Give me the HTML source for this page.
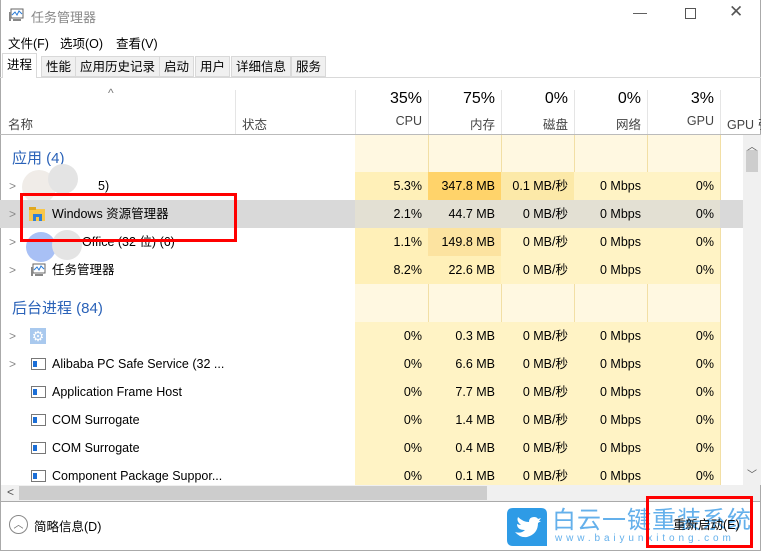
<!DOCTYPE html><html><head><meta charset="utf-8"><style>
*{margin:0;padding:0;box-sizing:border-box}
body{width:761px;height:551px;overflow:hidden;background:#fff;font-family:"Liberation Sans","Noto Sans CJK SC",sans-serif;font-size:12px;color:#000;position:relative}
.a{position:absolute;white-space:nowrap}
.r{position:absolute;left:0;width:743px;height:28px}
.c{position:absolute;top:0;height:28px;line-height:28px;text-align:right;padding-right:6px;font-size:12.5px}
.nm{position:absolute;left:52px;top:0;line-height:28px;font-size:12.5px}
.ch{position:absolute;left:9px;top:0;line-height:28px;color:#888;font-size:12px}
.ic{position:absolute;left:31px;top:8px;width:15px;height:12px;border:1px solid #777;background:#fff}
.ic:after{content:"";position:absolute;left:1px;top:2px;width:4px;height:6px;background:#1b6ed6}
.tab{position:absolute;top:56px;height:21px;line-height:20px;border:1px solid #d9d9d9;background:#f0f0f0;padding:0 4px;font-size:12.5px}
</style></head><body>
<div class="a" style="left:0;top:0;width:761px;height:551px;border:1px solid #aaa;border-top:none"></div>
<svg class="a" style="left:8px;top:8px" width="16" height="14"><rect x="3" y="1" width="12" height="9" fill="#fff" stroke="#666"/><polyline points="4,7 7,4 9,7 11,3 14,6" fill="none" stroke="#2a7bd6"/><rect x="1" y="4" width="2" height="9" fill="#888"/><rect x="5" y="11" width="8" height="2" fill="#888"/></svg>
<div class="a" style="left:31px;top:7px;font-size:13px;color:#888">任务管理器</div>
<div class="a" style="left:633px;top:4px;font-size:14px;color:#555">—</div>
<div class="a" style="left:685px;top:8px;width:11px;height:11px;border:1px solid #555"></div>
<div class="a" style="left:729px;top:2px;font-size:17px;color:#555">✕</div>
<div class="a" style="left:8px;top:33px;font-size:12.5px">文件(F)</div>
<div class="a" style="left:60px;top:33px;font-size:12.5px">选项(O)</div>
<div class="a" style="left:116px;top:33px;font-size:12.5px">查看(V)</div>
<div class="a" style="left:0;top:77px;width:761px;border-top:1px solid #d9d9d9"></div>
<div class="tab" style="left:41px">性能</div><div class="tab" style="left:75px">应用历史记录</div><div class="tab" style="left:159px">启动</div><div class="tab" style="left:195px">用户</div><div class="tab" style="left:231px">详细信息</div><div class="tab" style="left:291px">服务</div>
<div class="tab" style="left:2px;top:53px;height:25px;background:#fff;border-bottom:none;line-height:22px">进程</div>
<div class="a" style="left:108px;top:86px;color:#777;font-size:12px">^</div>
<div class="a" style="left:8px;top:114px;color:#444;font-size:12.5px">名称</div>
<div class="a" style="left:242px;top:114px;color:#444;font-size:12.5px">状态</div>
<div class="a" style="left:235px;top:90px;height:44px;border-left:1px solid #e5e5e5"></div>
<div class="a" style="left:355px;top:90px;height:44px;border-left:1px solid #e5e5e5"></div>
<div class="a" style="left:428px;top:90px;height:44px;border-left:1px solid #e5e5e5"></div>
<div class="a" style="left:501px;top:90px;height:44px;border-left:1px solid #e5e5e5"></div>
<div class="a" style="left:574px;top:90px;height:44px;border-left:1px solid #e5e5e5"></div>
<div class="a" style="left:647px;top:90px;height:44px;border-left:1px solid #e5e5e5"></div>
<div class="a" style="left:720px;top:90px;height:44px;border-left:1px solid #e5e5e5"></div>
<div class="a" style="left:355px;top:90px;width:67px;text-align:right;font-size:16px">35%</div>
<div class="a" style="left:428px;top:90px;width:67px;text-align:right;font-size:16px">75%</div>
<div class="a" style="left:501px;top:90px;width:67px;text-align:right;font-size:16px">0%</div>
<div class="a" style="left:574px;top:90px;width:67px;text-align:right;font-size:16px">0%</div>
<div class="a" style="left:647px;top:90px;width:67px;text-align:right;font-size:16px">3%</div>
<div class="a" style="left:355px;top:114px;width:67px;text-align:right;color:#444;font-size:12.5px">CPU</div>
<div class="a" style="left:428px;top:114px;width:67px;text-align:right;color:#444;font-size:12.5px">内存</div>
<div class="a" style="left:501px;top:114px;width:67px;text-align:right;color:#444;font-size:12.5px">磁盘</div>
<div class="a" style="left:574px;top:114px;width:67px;text-align:right;color:#444;font-size:12.5px">网络</div>
<div class="a" style="left:647px;top:114px;width:67px;text-align:right;color:#444;font-size:12.5px">GPU</div>
<div class="a" style="left:727px;top:114px;color:#444;font-size:12.5px">GPU 引</div>
<div class="a" style="left:0;top:134px;width:761px;border-top:1px solid #bbb"></div>
<div class="a" style="left:355px;top:135px;width:365px;height:350px;background:#fff8e1"></div>
<div class="a" style="left:428px;top:135px;height:350px;border-left:1px solid #f2dfa5"></div>
<div class="a" style="left:501px;top:135px;height:350px;border-left:1px solid #f2dfa5"></div>
<div class="a" style="left:574px;top:135px;height:350px;border-left:1px solid #f2dfa5"></div>
<div class="a" style="left:647px;top:135px;height:350px;border-left:1px solid #f2dfa5"></div>
<div class="a" style="left:720px;top:135px;height:350px;border-left:1px solid #f2dfa5"></div>
<div class="a" style="left:12px;top:147px;font-size:15px;color:#2a62b8">应用 (4)</div>
<div class="a" style="left:12px;top:297px;font-size:15px;color:#2a62b8">后台进程 (84)</div>
<div class="r" style="top:172px"><div class="ch">&gt;</div>
<div class="a" style="left:22px;top:-2px;width:34px;height:34px;border-radius:50%;background:#f0ece8"></div><div class="a" style="left:48px;top:-8px;width:30px;height:30px;border-radius:50%;background:#e4e4e4"></div><div class="nm" style="left:98px">5)</div>
<div class="c" style="left:355px;width:73px;background:#fff0b8">5.3%</div><div class="c" style="left:428px;width:73px;background:#ffd36a">347.8 MB</div><div class="c" style="left:501px;width:73px;background:#fce9a8">0.1 MB/秒</div><div class="c" style="left:574px;width:73px;background:#fff3c5">0 Mbps</div><div class="c" style="left:647px;width:73px;background:#fff3c5">0%</div></div>
<div class="r" style="top:200px;background:#d9d9d9"><div class="ch">&gt;</div>
<svg class="a" style="left:29px;top:7px" width="16" height="14"><rect x="0" y="2" width="16" height="12" fill="#f8c74a"/><rect x="0" y="0" width="7" height="3" fill="#e0a820"/><rect x="4" y="7" width="9" height="7" fill="#2f7fd8"/><rect x="7" y="10" width="3" height="4" fill="#f8c74a"/></svg>
<div class="nm">Windows 资源管理器</div>
<div class="c" style="left:355px;width:365px;background:#e3e0d3"></div>
<div class="c" style="left:355px;width:73px">2.1%</div><div class="c" style="left:428px;width:73px">44.7 MB</div><div class="c" style="left:501px;width:73px">0 MB/秒</div><div class="c" style="left:574px;width:73px">0 Mbps</div><div class="c" style="left:647px;width:73px">0%</div></div>
<div class="r" style="top:228px"><div class="ch">&gt;</div>
<div class="a" style="left:26px;top:4px;width:30px;height:30px;border-radius:50%;background:#a8c0f5"></div><div class="a" style="left:52px;top:2px;width:30px;height:30px;border-radius:50%;background:#e4e4e4"></div><div class="nm" style="left:82px">Office (32 位) (6)</div>
<div class="c" style="left:355px;width:73px;background:#fff0b8">1.1%</div><div class="c" style="left:428px;width:73px;background:#fce3a0">149.8 MB</div><div class="c" style="left:501px;width:73px;background:#fff3c5">0 MB/秒</div><div class="c" style="left:574px;width:73px;background:#fff3c5">0 Mbps</div><div class="c" style="left:647px;width:73px;background:#fff3c5">0%</div></div>
<div class="r" style="top:256px"><div class="ch">&gt;</div>
<svg class="a" style="left:30px;top:7px" width="16" height="14"><rect x="3" y="1" width="12" height="9" fill="#fff" stroke="#666"/><polyline points="4,7 7,4 9,7 11,3 14,6" fill="none" stroke="#2a7bd6"/><rect x="1" y="4" width="2" height="9" fill="#888"/><rect x="5" y="11" width="8" height="2" fill="#888"/></svg>
<div class="nm">任务管理器</div>
<div class="c" style="left:355px;width:73px;background:#fff0b8">8.2%</div><div class="c" style="left:428px;width:73px;background:#fff0b8">22.6 MB</div><div class="c" style="left:501px;width:73px;background:#fff3c5">0 MB/秒</div><div class="c" style="left:574px;width:73px;background:#fff3c5">0 Mbps</div><div class="c" style="left:647px;width:73px;background:#fff3c5">0%</div></div>
<div class="r" style="top:322px"><div class="ch">&gt;</div><div class="a" style="left:30px;top:6px;width:16px;height:16px;background:#a9c9ee;color:#fff;font-size:14px;line-height:16px;text-align:center">⚙</div>
<div class="c" style="left:355px;width:73px;background:#fff3c5">0%</div><div class="c" style="left:428px;width:73px;background:#fff3c5">0.3 MB</div><div class="c" style="left:501px;width:73px;background:#fff3c5">0 MB/秒</div><div class="c" style="left:574px;width:73px;background:#fff3c5">0 Mbps</div><div class="c" style="left:647px;width:73px;background:#fff3c5">0%</div></div>
<div class="r" style="top:350px"><div class="ch">&gt;</div><div class="ic"></div><div class="nm">Alibaba PC Safe Service (32 ...</div>
<div class="c" style="left:355px;width:73px;background:#fff3c5">0%</div><div class="c" style="left:428px;width:73px;background:#fff3c5">6.6 MB</div><div class="c" style="left:501px;width:73px;background:#fff3c5">0 MB/秒</div><div class="c" style="left:574px;width:73px;background:#fff3c5">0 Mbps</div><div class="c" style="left:647px;width:73px;background:#fff3c5">0%</div></div>
<div class="r" style="top:378px"><div class="ic"></div><div class="nm">Application Frame Host</div>
<div class="c" style="left:355px;width:73px;background:#fff3c5">0%</div><div class="c" style="left:428px;width:73px;background:#fff3c5">7.7 MB</div><div class="c" style="left:501px;width:73px;background:#fff3c5">0 MB/秒</div><div class="c" style="left:574px;width:73px;background:#fff3c5">0 Mbps</div><div class="c" style="left:647px;width:73px;background:#fff3c5">0%</div></div>
<div class="r" style="top:406px"><div class="ic"></div><div class="nm">COM Surrogate</div>
<div class="c" style="left:355px;width:73px;background:#fff3c5">0%</div><div class="c" style="left:428px;width:73px;background:#fff3c5">1.4 MB</div><div class="c" style="left:501px;width:73px;background:#fff3c5">0 MB/秒</div><div class="c" style="left:574px;width:73px;background:#fff3c5">0 Mbps</div><div class="c" style="left:647px;width:73px;background:#fff3c5">0%</div></div>
<div class="r" style="top:434px"><div class="ic"></div><div class="nm">COM Surrogate</div>
<div class="c" style="left:355px;width:73px;background:#fff3c5">0%</div><div class="c" style="left:428px;width:73px;background:#fff3c5">0.4 MB</div><div class="c" style="left:501px;width:73px;background:#fff3c5">0 MB/秒</div><div class="c" style="left:574px;width:73px;background:#fff3c5">0 Mbps</div><div class="c" style="left:647px;width:73px;background:#fff3c5">0%</div></div>
<div class="r" style="top:462px;height:23px;overflow:hidden"><div class="ic"></div><div class="nm">Component Package Suppor...</div>
<div class="c" style="left:355px;width:73px;background:#fff3c5">0%</div><div class="c" style="left:428px;width:73px;background:#fff3c5">0.1 MB</div><div class="c" style="left:501px;width:73px;background:#fff3c5">0 MB/秒</div><div class="c" style="left:574px;width:73px;background:#fff3c5">0 Mbps</div><div class="c" style="left:647px;width:73px;background:#fff3c5">0%</div></div>
<div class="a" style="left:743px;top:135px;width:18px;height:350px;background:#f0f0f0"></div>
<div class="a" style="left:746px;top:150px;width:12px;height:22px;background:#cdcdcd"></div>
<div class="a" style="left:747px;top:138px;font-size:10px;color:#555">︿</div>
<div class="a" style="left:747px;top:466px;font-size:10px;color:#555">﹀</div>
<div class="a" style="left:1px;top:485px;width:759px;height:16px;background:#f0f0f0"></div>
<div class="a" style="left:19px;top:486px;width:468px;height:14px;background:#cdcdcd"></div>
<div class="a" style="left:7px;top:485px;font-size:12px;color:#555">&lt;</div>
<div class="a" style="left:0;top:501px;width:761px;border-top:1px solid #aaa"></div>
<div class="a" style="left:9px;top:515px;width:19px;height:19px;border:1px solid #888;border-radius:50%;text-align:center;font-size:10px;line-height:19px;color:#666">︿</div>
<div class="a" style="left:34px;top:516px;font-size:12.5px">简略信息(D)</div>
<svg class="a" style="left:507px;top:508px" width="40" height="38"><path d="M4 0H34Q40 0 40 6V38H6Q0 38 0 32V6Q0 0 6 0Z" fill="#2e9be6"/><path d="M8 24Q14 26 18 22Q10 22 10 16Q12 17 14 17Q9 13 11 9Q16 14 22 14Q22 9 27 9Q30 9 31 11L34 10L32 13L34 13L31 15Q31 26 20 29Q13 30 8 24Z" fill="#fff"/></svg>
<div class="a" style="left:552px;top:507px;font-size:24px;line-height:28px;color:#4aa3e8;letter-spacing:1px;opacity:.85">白云一键重装系统</div>
<div class="a" style="left:555px;top:533px;font-size:10px;color:#4aa3e8;letter-spacing:3.9px;opacity:.85">www.baiyunxitong.com</div>
<div class="a" style="left:673px;top:514px;font-size:12.5px">重新启动(E)</div>
<div class="a" style="left:20px;top:193px;width:217px;height:49px;border:3px solid #f00"></div>
<div class="a" style="left:646px;top:496px;width:107px;height:52px;border:3px solid #f00"></div>
</body></html>
